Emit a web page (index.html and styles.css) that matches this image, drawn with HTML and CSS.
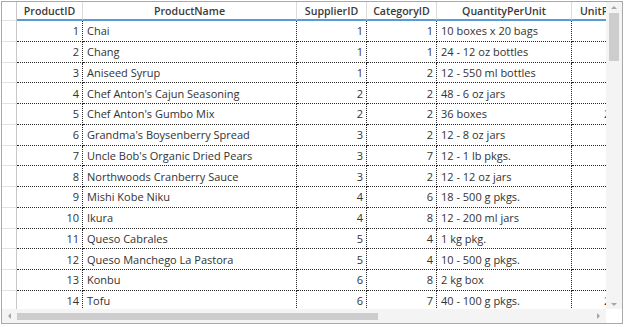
FILE: index.html
```html
<!DOCTYPE html>
<html>
<head>
<meta charset="utf-8">
<link rel="stylesheet" href="styles.css">
</head>
<body>
<div class="grid">
  <div class="viewport">
    <div class="row head">
      <div class="rh"></div>
      <div class="c w1">ProductID</div>
      <div class="c w2">ProductName</div>
      <div class="c w3">SupplierID</div>
      <div class="c w4">CategoryID</div>
      <div class="c w5">QuantityPerUnit</div>
      <div class="c w6">UnitPrice</div>
    </div>
    <div class="row"><div class="rh"></div><div class="c w1 num">1</div><div class="c w2">Chai</div><div class="c w3 num">1</div><div class="c w4 num">1</div><div class="c w5">10 boxes x 20 bags</div><div class="c w6 num">18</div></div>
    <div class="row"><div class="rh"></div><div class="c w1 num">2</div><div class="c w2">Chang</div><div class="c w3 num">1</div><div class="c w4 num">1</div><div class="c w5">24 - 12 oz bottles</div><div class="c w6 num">19</div></div>
    <div class="row"><div class="rh"></div><div class="c w1 num">3</div><div class="c w2">Aniseed Syrup</div><div class="c w3 num">1</div><div class="c w4 num">2</div><div class="c w5">12 - 550 ml bottles</div><div class="c w6 num">10</div></div>
    <div class="row"><div class="rh"></div><div class="c w1 num">4</div><div class="c w2">Chef Anton's Cajun Seasoning</div><div class="c w3 num">2</div><div class="c w4 num">2</div><div class="c w5">48 - 6 oz jars</div><div class="c w6 num">22</div></div>
    <div class="row"><div class="rh"></div><div class="c w1 num">5</div><div class="c w2">Chef Anton's Gumbo Mix</div><div class="c w3 num">2</div><div class="c w4 num">2</div><div class="c w5">36 boxes</div><div class="c w6 num">21.35</div></div>
    <div class="row"><div class="rh"></div><div class="c w1 num">6</div><div class="c w2">Grandma's Boysenberry Spread</div><div class="c w3 num">3</div><div class="c w4 num">2</div><div class="c w5">12 - 8 oz jars</div><div class="c w6 num">25</div></div>
    <div class="row"><div class="rh"></div><div class="c w1 num">7</div><div class="c w2">Uncle Bob's Organic Dried Pears</div><div class="c w3 num">3</div><div class="c w4 num">7</div><div class="c w5">12 - 1 lb pkgs.</div><div class="c w6 num">30</div></div>
    <div class="row"><div class="rh"></div><div class="c w1 num">8</div><div class="c w2">Northwoods Cranberry Sauce</div><div class="c w3 num">3</div><div class="c w4 num">2</div><div class="c w5">12 - 12 oz jars</div><div class="c w6 num">40</div></div>
    <div class="row"><div class="rh"></div><div class="c w1 num">9</div><div class="c w2">Mishi Kobe Niku</div><div class="c w3 num">4</div><div class="c w4 num">6</div><div class="c w5">18 - 500 g pkgs.</div><div class="c w6 num">97</div></div>
    <div class="row"><div class="rh"></div><div class="c w1 num">10</div><div class="c w2">Ikura</div><div class="c w3 num">4</div><div class="c w4 num">8</div><div class="c w5">12 - 200 ml jars</div><div class="c w6 num">31</div></div>
    <div class="row"><div class="rh"></div><div class="c w1 num">11</div><div class="c w2">Queso Cabrales</div><div class="c w3 num">5</div><div class="c w4 num">4</div><div class="c w5">1 kg pkg.</div><div class="c w6 num">21</div></div>
    <div class="row"><div class="rh"></div><div class="c w1 num">12</div><div class="c w2">Queso Manchego La Pastora</div><div class="c w3 num">5</div><div class="c w4 num">4</div><div class="c w5">10 - 500 g pkgs.</div><div class="c w6 num">38</div></div>
    <div class="row"><div class="rh"></div><div class="c w1 num">13</div><div class="c w2">Konbu</div><div class="c w3 num">6</div><div class="c w4 num">8</div><div class="c w5">2 kg box</div><div class="c w6 num">6</div></div>
    <div class="row"><div class="rh"></div><div class="c w1 num">14</div><div class="c w2">Tofu</div><div class="c w3 num">6</div><div class="c w4 num">7</div><div class="c w5">40 - 100 g pkgs.</div><div class="c w6 num">23.25</div></div>
  </div>
  <div class="vscroll">
    <div class="arrow up"></div>
    <div class="vtrack"><div class="vthumb"></div></div>
    <div class="arrow down"></div>
  </div>
  <div class="hscroll">
    <div class="arrow left"></div>
    <div class="htrack"><div class="hthumb"></div></div>
    <div class="arrow right"></div>
  </div>
  <div class="corner"></div>
</div>
</body>
</html>
```
FILE: styles.css
```css
html, body {
  margin: 0;
  padding: 0;
  background: #ffffff;
}
body {
  font-family: "Open Sans", "Noto Sans", sans-serif;
  font-size: 11px;
  color: #333333;
}
.grid {
  margin: 1px;
  width: 620px;
  height: 321px;
  border: 1px solid #a9a9a9;
  display: grid;
  grid-template-columns: 604px 16px;
  grid-template-rows: 307px 14px;
  background: #ffffff;
}
.viewport {
  overflow: hidden;
  position: relative;
}
.row {
  display: flex;
  height: 20.75px;
  white-space: nowrap;
}
.row.head {
  height: 19px;
}
.rh {
  flex: none;
  width: 15px;
  box-sizing: border-box;
  border-right: 1px solid #c8c8c8;
  border-bottom: 1px solid #e2e2e2;
}
.c {
  flex: none;
  box-sizing: border-box;
  border-right: 1px dotted #262626;
  border-bottom: 1px dotted #262626;
  padding: 0 4px 0 4px;
  display: flex;
  align-items: center;
  overflow: hidden;
}
.num {
  justify-content: flex-end;
  padding-right: 3px;
}
.head .c {
  justify-content: center;
  font-size: 10.6px;
  font-weight: 600;
  color: #3a3a3a;
  border-right: 1px solid #dcdcdc;
  border-bottom: 2px solid #5b9bd5;
  padding: 1px 0 0 0;
}
.w1 { width: 66px; }
.w2 { width: 214px; }
.w3 { width: 70px; }
.w4 { width: 70px; }
.w5 { width: 135px; }
.w6 { width: 64px; }
.vscroll {
  display: flex;
  flex-direction: column;
  align-items: center;
  background: #f4f4f4;
}
.vtrack {
  flex: 1;
  width: 100%;
  display: flex;
  flex-direction: column;
  align-items: center;
}
.vthumb {
  width: 10px;
  height: 48px;
  background: #cdcdcd;
}
.hscroll {
  display: flex;
  align-items: center;
  background: #f4f4f4;
}
.htrack {
  flex: 1;
  height: 100%;
  display: flex;
  align-items: center;
}
.hthumb {
  width: 361px;
  height: 7px;
  background: #cdcdcd;
}
.corner {
  background: #ffffff;
}
.arrow {
  flex: none;
  display: flex;
  align-items: center;
  justify-content: center;
  width: 15px;
  height: 11px;
}
.arrow::before {
  content: "";
  width: 0;
  height: 0;
}
.up::before {
  border-left: 3px solid transparent;
  border-right: 3px solid transparent;
  border-bottom: 3px solid #a6a6a6;
}
.down {
  height: 10px;
}
.down::before {
  border-left: 3px solid transparent;
  border-right: 3px solid transparent;
  border-top: 3px solid #a6a6a6;
}
.left, .right {
  width: 15px;
  height: 14px;
}
.left::before {
  border-top: 3px solid transparent;
  border-bottom: 3px solid transparent;
  border-right: 3px solid #a6a6a6;
}
.right::before {
  border-top: 3px solid transparent;
  border-bottom: 3px solid transparent;
  border-left: 3px solid #a6a6a6;
}
```
